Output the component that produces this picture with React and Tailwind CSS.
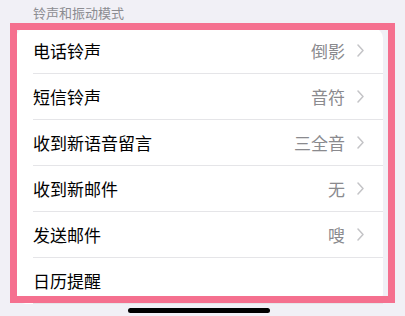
const rows = [
  { label: "电话铃声", value: "倒影" },
  { label: "短信铃声", value: "音符" },
  { label: "收到新语音留言", value: "三全音" },
  { label: "收到新邮件", value: "无" },
  { label: "发送邮件", value: "嗖" },
  { label: "日历提醒", value: "" },
];

const Chevron = () => (
  <svg width="7" height="13" viewBox="0 0 7 13" className="ml-[12px] shrink-0">
    <path
      d="M1 1 L6 6.5 L1 12"
      fill="none"
      stroke="#c4c4c7"
      strokeWidth="1.5"
      strokeLinecap="round"
      strokeLinejoin="round"
    />
  </svg>
);

const Row = ({ label, value }) => (
  <div className="flex h-[46px] items-center pl-[17px]">
    <div className="flex h-full flex-1 items-center border-b border-[#e5e5e8] pr-[19px]">
      <span className="flex-1 text-[17px] text-black">{label}</span>
      {value ? (
        <>
          <span className="text-[17px] text-[#8a8a8e]">{value}</span>
          <Chevron />
        </>
      ) : null}
    </div>
  </div>
);

export default function App() {
  return (
    <div
      className="relative h-[316px] w-[405px] overflow-hidden bg-[#f1f0f6]"
      style={{ fontFamily: '"Noto Sans CJK SC", "Noto Sans", sans-serif' }}
    >
      <div className="px-[33px] pt-[4px] text-[13px] leading-[18px] text-[#8c8c91]">
        铃声和振动模式
      </div>
      <div className="ml-[16px] mr-[22px] mt-[6px] rounded-[10px] bg-white">
        {rows.map((row) => (
          <Row key={row.label} label={row.label} value={row.value} />
        ))}
      </div>

      {/* highlight frame */}
      <div className="absolute left-[10px] top-[23px] h-[280px] w-[385px] border-[7px] border-[#f5708f]" />

      {/* home indicator */}
      <div className="absolute left-[128px] top-[308px] h-[5px] w-[142px] rounded-full bg-black" />
    </div>
  );
}
